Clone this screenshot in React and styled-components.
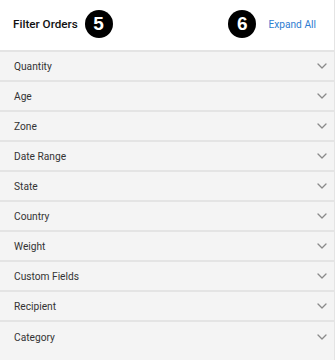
import React from "react";
import styled, { createGlobalStyle } from "styled-components";

const Global = createGlobalStyle`
  body {
    margin: 0;
    background: #fff;
    font-family: Roboto, "Liberation Sans", sans-serif;
  }
`;

const Panel = styled.div`
  width: 335px;
  height: 360px;
  box-sizing: border-box;
  border-right: 1px solid #e4e4e4;
  background: #f4f4f4;
  overflow: hidden;
`;

const Header = styled.div`
  height: 52px;
  display: flex;
  align-items: center;
  justify-content: space-between;
  padding: 0 18px 2px 13px;
  background: #fff;
  border-bottom: 2px solid #e4e4e4;
  box-sizing: border-box;
`;

const Group = styled.div`
  display: flex;
  align-items: center;
  gap: ${(p) => p.gap}px;
`;

const Title = styled.span`
  font-size: 11.7px;
  font-weight: 500;
  color: #111;
`;

const Badge = styled.span`
  width: 28px;
  height: 28px;
  border-radius: 50%;
  background: #000;
  color: #fff;
  display: flex;
  align-items: center;
  justify-content: center;
  font-family: "Liberation Sans", Arial, sans-serif;
  font-weight: 700;
  font-size: 19px;
`;

const Link = styled.a`
  font-size: 10.2px;
  color: #2e7dd1;
  text-decoration: none;
`;

const Row = styled.div`
  height: 30px;
  display: flex;
  align-items: center;
  justify-content: space-between;
  padding: 0 6px 0 14px;
  box-sizing: border-box;
  border-bottom: 2px solid #e4e4e4;
  font-size: 10.2px;
  color: #333;

  &:last-child {
    border-bottom: none;
  }
`;

const Chevron = () => (
  <svg width="12" height="12" viewBox="0 0 24 24" fill="none" stroke="#8a8a8a" strokeWidth="2.6" strokeLinecap="round" strokeLinejoin="round">
    <path d="M4 8l8 8 8-8" />
  </svg>
);

const filters = ["Quantity", "Age", "Zone", "Date Range", "State", "Country", "Weight", "Custom Fields", "Recipient", "Category"];

export default function App() {
  return (
    <>
      <Global />
      <Panel>
        <Header>
          <Group gap={7}>
            <Title>Filter Orders</Title>
            <Badge>5</Badge>
          </Group>
          <Group gap={12}>
            <Badge>6</Badge>
            <Link href="#">Expand All</Link>
          </Group>
        </Header>
        {filters.map((f) => (
          <Row key={f}>
            <span>{f}</span>
            <Chevron />
          </Row>
        ))}
      </Panel>
    </>
  );
}
